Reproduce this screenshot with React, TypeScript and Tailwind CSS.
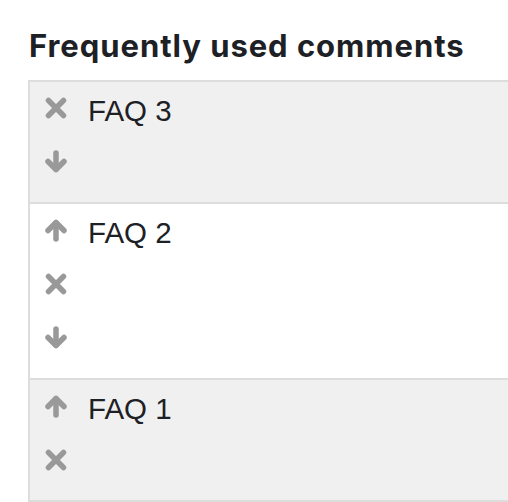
import React from "react";

type Action = "up" | "down" | "delete";

const ROWS: { label: string; actions: Action[]; shaded: boolean }[] = [
  { label: "FAQ 3", actions: ["delete", "down"], shaded: true },
  { label: "FAQ 2", actions: ["up", "delete", "down"], shaded: false },
  { label: "FAQ 1", actions: ["up", "delete"], shaded: true },
];

function ActionIcon({ type }: { type: Action }) {
  if (type === "delete") {
    return (
      <svg width="24" height="24" viewBox="0 0 24 24" fill="none" stroke="#999999" strokeWidth="5.5" strokeLinecap="round">
        <path d="M4.5 4.5L19.5 19.5M19.5 4.5L4.5 19.5" />
      </svg>
    );
  }
  const flip = type === "down" ? "rotate(180 12 12)" : undefined;
  return (
    <svg width="24" height="24" viewBox="0 0 24 24" fill="none" stroke="#999999" strokeWidth="5.5" strokeLinecap="round" strokeLinejoin="round">
      <g transform={flip}>
        <path d="M12 21V5" />
        <path d="M4 12.5L12 4.5L20 12.5" />
      </g>
    </svg>
  );
}

export default function App() {
  return (
    <div className="w-[508px] h-[502px] overflow-hidden bg-white font-['Inter',sans-serif] text-[#1d2125]">
      {/* Heading */}
      <h3 className="pt-[28px] pl-[29px] text-[31px] leading-[36px] font-bold tracking-[0.95px]">
        Frequently used comments
      </h3>

      {/* Comment list */}
      <div className="mt-[16px] ml-[28px] w-[520px] border-2 border-[#dddddd]">
        {ROWS.map((row, i) => (
          <div
            key={row.label}
            className={`flex pb-[12px] ${i > 0 ? "border-t-2 border-[#dddddd]" : ""} ${
              row.shaded ? "bg-[#f0f0f0]" : "bg-white"
            }`}
          >
            <div className="flex flex-col pl-[14px]">
              {row.actions.map((a) => (
                <div key={a} className="h-[54px] pt-[14px]">
                  <ActionIcon type={a} />
                </div>
              ))}
            </div>
            <div className="pl-[20px] pt-[9px] font-['Liberation_Sans',Arial,sans-serif] text-[29.5px] leading-[40px]">
              {row.label}
            </div>
          </div>
        ))}
      </div>
    </div>
  );
}
